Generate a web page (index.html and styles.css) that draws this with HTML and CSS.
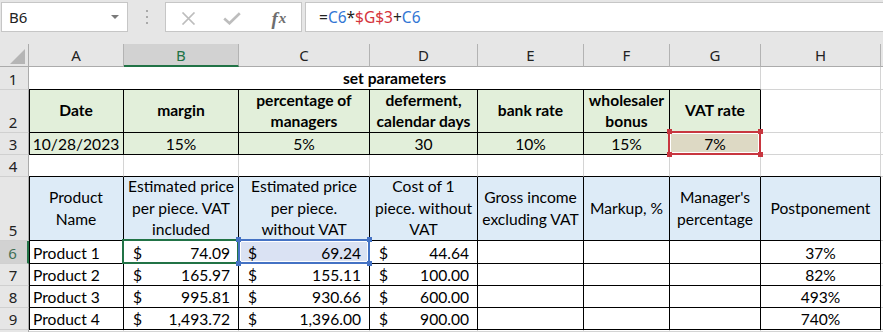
FILE: index.html
```html
<!DOCTYPE html>
<html>
<head>
<meta charset="utf-8">
<link rel="stylesheet" href="styles.css">
</head>
<body>
<div class="app">
  <div class="fbar">
    <div class="namebox"><span class="ref">B6</span><span class="caret"></span></div>
    <div class="grip"><i></i><i></i><i></i></div>
    <div class="fxbox">
      <span class="slot"><svg width="15" height="13" viewBox="0 0 15 13"><path d="M1.5 0.5 L13.5 12.5 M13.5 0.5 L1.5 12.5" stroke="#bdbdbd" stroke-width="1.7" fill="none"/></svg></span>
      <span class="slot"><svg width="18" height="13" viewBox="0 0 18 13"><path d="M1.2 6.5 L6.5 11.3 L16.8 1.2" stroke="#bdbdbd" stroke-width="2.6" fill="none"/></svg></span>
      <span class="slot fx"><i class="f">f</i><i class="x">x</i></span>
    </div>
    <div class="formula">=<span class="r1">C6</span>*<span class="r2">$G$3</span>+<span class="r1">C6</span></div>
  </div>

  <div class="sheet">
    <!-- column headers -->
    <div class="corner"><svg width="15" height="15" viewBox="0 0 15 15"><polygon points="15,0 15,15 0,15" fill="#b5b5b5"/></svg></div>
    <div class="ch">A</div>
    <div class="ch sel">B</div>
    <div class="ch">C</div>
    <div class="ch">D</div>
    <div class="ch">E</div>
    <div class="ch">F</div>
    <div class="ch">G</div>
    <div class="ch">H</div>
    <div class="ch end"></div>

    <!-- row 1 -->
    <div class="rh">1</div>
    <div class="c title">set parameters</div>
    <div class="c"></div>
    <div class="c"></div>

    <!-- row 2 -->
    <div class="rh">2</div>
    <div class="c p lh la"><span>Date</span></div>
    <div class="c p lh"><span>margin</span></div>
    <div class="c p lh"><span>percentage of<br>managers</span></div>
    <div class="c p lh"><span>deferment,<br>calendar days</span></div>
    <div class="c p lh"><span>bank rate</span></div>
    <div class="c p lh"><span>wholesaler<br>bonus</span></div>
    <div class="c p lh"><span>VAT rate</span></div>
    <div class="c"></div>
    <div class="c"></div>

    <!-- row 3 -->
    <div class="rh">3</div>
    <div class="c p ctr la">10/28/2023</div>
    <div class="c p ctr">15%</div>
    <div class="c p ctr">5%</div>
    <div class="c p ctr">30</div>
    <div class="c p ctr">10%</div>
    <div class="c p ctr">15%</div>
    <div class="c p ctr g3"><span class="hnd tl"></span><span class="hnd tr"></span><span class="hnd bl"></span><span class="hnd br"></span>7%</div>
    <div class="c"></div>
    <div class="c"></div>

    <!-- row 4 -->
    <div class="rh">4</div>
    <div class="c ab"></div>
    <div class="c ab"></div>
    <div class="c ab"></div>
    <div class="c ab"></div>
    <div class="c ab"></div>
    <div class="c ab"></div>
    <div class="c ab"></div>
    <div class="c ab"></div>
    <div class="c"></div>

    <!-- row 5 -->
    <div class="rh">5</div>
    <div class="c t hb lh la"><span>Product<br>Name</span></div>
    <div class="c t hb lh"><span>Estimated price<br>per piece. VAT<br>included</span></div>
    <div class="c t hb lh"><span>Estimated price<br>per piece.<br>without VAT</span></div>
    <div class="c t hb lh"><span>Cost of 1<br>piece. without<br>VAT</span></div>
    <div class="c t hb lh"><span>Gross income<br>excluding VAT</span></div>
    <div class="c t hb lh"><span>Markup, %</span></div>
    <div class="c t hb lh"><span>Manager's<br>percentage</span></div>
    <div class="c t hb lh"><span>Postponement</span></div>
    <div class="c"></div>

    <!-- row 6 -->
    <div class="rh rsel">6</div>
    <div class="c t la name">Product 1</div>
    <div class="c t acc active"><span>$</span><span>74.09</span></div>
    <div class="c t acc refc"><span class="hnd tl"></span><span class="hnd tr"></span><span class="hnd bl"></span><span class="hnd br"></span><span>$</span><span>69.24</span></div>
    <div class="c t acc"><span>$</span><span>44.64</span></div>
    <div class="c t"></div>
    <div class="c t"></div>
    <div class="c t"></div>
    <div class="c t ctr">37%</div>
    <div class="c"></div>

    <!-- row 7 -->
    <div class="rh">7</div>
    <div class="c t la name">Product 2</div>
    <div class="c t acc"><span>$</span><span>165.97</span></div>
    <div class="c t acc"><span>$</span><span>155.11</span></div>
    <div class="c t acc"><span>$</span><span>100.00</span></div>
    <div class="c t"></div>
    <div class="c t"></div>
    <div class="c t"></div>
    <div class="c t ctr">82%</div>
    <div class="c"></div>

    <!-- row 8 -->
    <div class="rh">8</div>
    <div class="c t la name">Product 3</div>
    <div class="c t acc"><span>$</span><span>995.81</span></div>
    <div class="c t acc"><span>$</span><span>930.66</span></div>
    <div class="c t acc"><span>$</span><span>600.00</span></div>
    <div class="c t"></div>
    <div class="c t"></div>
    <div class="c t"></div>
    <div class="c t ctr">493%</div>
    <div class="c"></div>

    <!-- row 9 -->
    <div class="rh">9</div>
    <div class="c t la name">Product 4</div>
    <div class="c t acc"><span>$</span><span>1,493.72</span></div>
    <div class="c t acc"><span>$</span><span>1,396.00</span></div>
    <div class="c t acc"><span>$</span><span>900.00</span></div>
    <div class="c t"></div>
    <div class="c t"></div>
    <div class="c t"></div>
    <div class="c t ctr">740%</div>
    <div class="c"></div>

    <!-- row 10 (partially visible) -->
    <div class="rh last"></div>
    <div class="c"></div>
    <div class="c"></div>
    <div class="c"></div>
    <div class="c"></div>
    <div class="c"></div>
    <div class="c"></div>
    <div class="c"></div>
    <div class="c"></div>
    <div class="c"></div>
  </div>
</div>
</body>
</html>
```

FILE: styles.css
```css
html, body {
  margin: 0;
  padding: 0;
  background: #e6e6e6;
}

.app {
  width: 883px;
  height: 332px;
  overflow: hidden;
}

/* ---------- formula bar ---------- */
.fbar {
  display: flex;
  align-items: flex-start;
  height: 44px;
  padding-top: 2px;
  box-sizing: border-box;
  font-family: "Noto Sans", "Open Sans", sans-serif;
}

.namebox {
  margin-left: 1px;
  width: 127px;
  height: 30px;
  box-sizing: border-box;
  background: #fff;
  border: 1px solid #c6c6c6;
  display: flex;
  align-items: center;
  padding-left: 7px;
  font-size: 15px;
  color: #222;
}

.caret {
  margin-left: auto;
  margin-right: 8px;
  width: 0;
  height: 0;
  border-left: 4px solid transparent;
  border-right: 4px solid transparent;
  border-top: 4px solid #7a7a7a;
}

.grip {
  width: 37px;
  height: 30px;
  display: flex;
  flex-direction: column;
  align-items: center;
  gap: 4px;
  padding-top: 8px;
  box-sizing: border-box;
}

.grip i {
  display: block;
  width: 2px;
  height: 2px;
  background: #a9a9a9;
}

.fxbox {
  width: 137px;
  height: 30px;
  box-sizing: border-box;
  background: #fff;
  border: 1px solid #c6c6c6;
  display: flex;
  align-items: center;
  padding-top: 2px;
}

.slot {
  width: 45px;
  display: flex;
  justify-content: center;
  align-items: center;
}

.fx {
  font-family: "Liberation Serif", "DejaVu Serif", serif;
  color: #6e6e6e;
  font-weight: bold;
  line-height: 1;
  padding-left: 2px;
}

.fx .f {
  font-size: 19px;
}

.fx .x {
  font-size: 15px;
  margin-left: 1px;
}

.formula {
  flex: 1;
  margin-left: 3px;
  height: 30px;
  box-sizing: border-box;
  background: #fff;
  border: 1px solid #c6c6c6;
  border-right: none;
  display: flex;
  align-items: center;
  padding-left: 13px;
  font-size: 15.5px;
  color: #222;
  white-space: pre;
}

.r1 { color: #3276d4; }
.r2 { color: #d4333b; }

/* ---------- sheet ---------- */
.sheet {
  display: grid;
  grid-template-columns: 29px 95px 115px 131px 108px 106px 86px 91px 120px 1fr;
  grid-template-rows: 23px 23px 43px 22px 22px 64px 23px 22px 22px 22px 1fr;
  height: 288px;
  background: #fff;
  font-family: "Lato", "Liberation Sans", sans-serif;
  font-size: 15.6px;
  color: #000;
}

.corner {
  background: #e6e6e6;
  border-right: 1px solid #ababab;
  border-bottom: 1px solid #ababab;
  box-sizing: border-box;
  display: flex;
  justify-content: flex-end;
  align-items: flex-end;
  padding: 0 3px 2px 0;
}

.corner svg { display: block; }

.ch {
  background: #e6e6e6;
  border-right: 1px solid #b3b3b3;
  border-bottom: 1px solid #ababab;
  box-sizing: border-box;
  display: flex;
  justify-content: center;
  align-items: center;
  font-family: "Noto Sans", "Open Sans", sans-serif;
  font-size: 15px;
  color: #222;
}

.ch.sel {
  background: #d2d2d2;
  color: #217346;
  border-bottom: 2px solid #217346;
}

.ch.end { border-right: none; }

.rh {
  background: #e6e6e6;
  border-right: 1px solid #ababab;
  border-bottom: 1px solid #d0d0d0;
  box-sizing: border-box;
  display: flex;
  justify-content: center;
  align-items: flex-end;
  font-family: "Noto Sans", "Open Sans", sans-serif;
  font-size: 15px;
  line-height: 18px;
  padding: 0 2px 1px 0;
  color: #222;
}

.rh.rsel {
  background: #d2d2d2;
  color: #3f6f55;
  border-right: 2px solid #217346;
}

.rh.last { border-bottom: none; }

.c {
  position: relative;
  border-right: 1px solid #d4d4d4;
  border-bottom: 1px solid #d4d4d4;
  box-sizing: border-box;
  display: flex;
  align-items: flex-end;
  padding: 0 3px 1px;
  line-height: 18px;
  white-space: nowrap;
  min-width: 0;
}

/* merged A1:G1 */
.title {
  grid-column: span 7;
  justify-content: center;
  align-items: center;
  font-weight: bold;
  border-bottom-color: #000;
  padding-top: 0;
}

/* parameter table A2:G3 */
.p {
  background: #e2efda;
  border-right-color: #000;
  border-bottom-color: #000;
}

/* product table A5:H9 */
.t {
  border-right-color: #000;
  border-bottom-color: #000;
}

/* cells above a table */
.ab { border-bottom-color: #000; }

/* left edge of table in column A */
.la { box-shadow: inset 1px 0 0 #000; }

.lh {
  justify-content: center;
  align-items: center;
  text-align: center;
  line-height: 21.5px;
  padding: 0;
}

.p.lh { font-weight: bold; }

.hb { background: #ddebf7; }

.ctr { justify-content: center; }

.name { padding-left: 4px; }

.acc {
  justify-content: space-between;
  padding-left: 9px;
  padding-right: 8px;
}

/* active cell B6 */
.active::after {
  content: "";
  position: absolute;
  top: -2px;
  left: -2px;
  right: -1px;
  bottom: -1px;
  border: 2px solid #217346;
  z-index: 2;
  pointer-events: none;
}

/* formula reference C6 */
.refc { background: #dae2f3; }

.refc::after {
  content: "";
  position: absolute;
  top: -2px;
  left: -1px;
  right: -1px;
  bottom: -1px;
  border: 2px solid #4472c4;
  box-shadow: inset 0 0 0 1px #fff;
  z-index: 3;
}

/* formula reference G3 */
.g3 { background: #ddd9c4; }

.g3::after {
  content: "";
  position: absolute;
  top: -2px;
  left: -2px;
  right: -1px;
  bottom: -1px;
  border: 2px solid #c8363f;
  box-shadow: inset 0 0 0 1px #fff;
  z-index: 3;
}

.hnd {
  position: absolute;
  width: 5px;
  height: 5px;
  z-index: 4;
}

.refc .hnd { background: #4472c4; }
.g3 .hnd { background: #c8363f; }

.hnd.tl { top: -4px; left: -3px; }
.hnd.tr { top: -4px; right: -3px; }
.hnd.bl { bottom: -3px; left: -3px; }
.hnd.br { bottom: -3px; right: -3px; }
```
